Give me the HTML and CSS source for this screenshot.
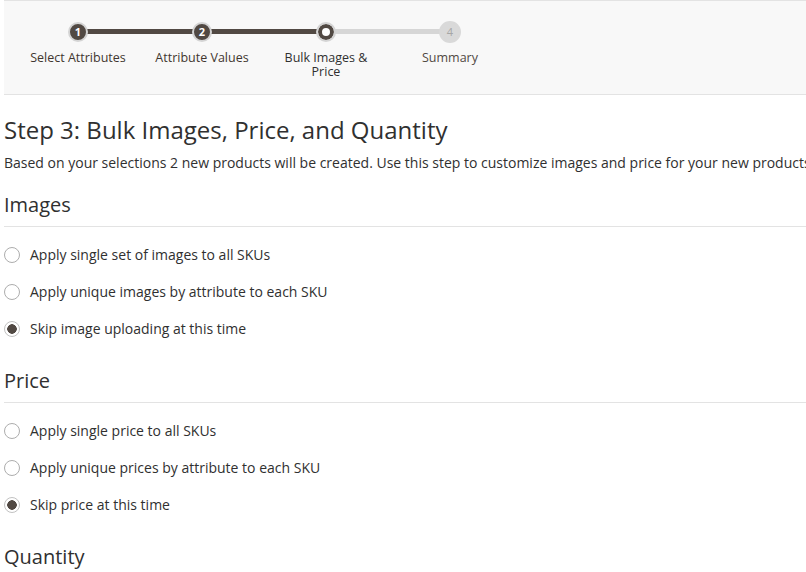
FILE: index.html
```html
<!DOCTYPE html>
<html lang="en">
<head>
<meta charset="utf-8">
<title>Step 3: Bulk Images, Price, and Quantity</title>
<link rel="stylesheet" href="styles.css">
</head>
<body>
<div class="page">
  <div class="wizard">
    <ol class="steps">
      <li class="step done"><span class="dot">1</span><span class="label">Select Attributes</span></li>
      <li class="step done"><span class="dot">2</span><span class="label">Attribute Values</span></li>
      <li class="step active"><span class="dot"></span><span class="label">Bulk Images &amp; Price</span></li>
      <li class="step todo"><span class="dot">4</span><span class="label">Summary</span></li>
    </ol>
  </div>

  <div class="content">
    <h1 class="title">Step 3: Bulk Images, Price, and Quantity</h1>
    <p class="intro">Based on your selections 2 new products will be created. Use this step to customize images and price for your new products.</p>

    <section class="section">
      <h2 class="section-title">Images</h2>
      <ul class="options">
        <li><label class="option"><input type="radio" name="images"><span>Apply single set of images to all SKUs</span></label></li>
        <li><label class="option"><input type="radio" name="images"><span>Apply unique images by attribute to each SKU</span></label></li>
        <li><label class="option"><input type="radio" name="images" checked><span>Skip image uploading at this time</span></label></li>
      </ul>
    </section>

    <section class="section">
      <h2 class="section-title">Price</h2>
      <ul class="options">
        <li><label class="option"><input type="radio" name="price"><span>Apply single price to all SKUs</span></label></li>
        <li><label class="option"><input type="radio" name="price"><span>Apply unique prices by attribute to each SKU</span></label></li>
        <li><label class="option"><input type="radio" name="price" checked><span>Skip price at this time</span></label></li>
      </ul>
    </section>

    <section class="section">
      <h2 class="section-title">Quantity</h2>
    </section>
  </div>
</div>
</body>
</html>
```

FILE: styles.css
```css
html, body {
  margin: 0;
  padding: 0;
  background: #ffffff;
  overflow: hidden;
}

body {
  font-family: "Open Sans", "Liberation Sans", sans-serif;
  color: #303030;
}

.page {
  padding-left: 4px;
  width: 900px;
}

/* ---------- wizard stepper ---------- */
.wizard {
  background: #f8f8f8;
  border-top: 1px solid #e3e3e3;
  border-bottom: 1px solid #e3e3e3;
  height: 93px;
  box-sizing: content-box;
}

.steps {
  list-style: none;
  margin: 0;
  padding: 21px 0 0 12px;
  display: flex;
}

.step {
  position: relative;
  width: 124px;
  display: flex;
  flex-direction: column;
  align-items: center;
}

.step:not(:last-child)::after {
  content: "";
  position: absolute;
  left: 62px;
  width: 124px;
  top: 7px;
  height: 5px;
  background: #514943;
  z-index: 0;
}

.step.active::after {
  background: #d6d6d6;
}

.dot {
  position: relative;
  z-index: 1;
  box-sizing: border-box;
  width: 20px;
  height: 20px;
  border-radius: 50%;
  background: #514943;
  border: 2px solid #d4d4d4;
  color: #ffffff;
  font-size: 11px;
  font-weight: 700;
  line-height: 16px;
  text-align: center;
}

.step.active .dot {
  background: #ffffff;
  border: 2px solid #d4d4d4;
  box-shadow: inset 0 0 0 4px #514943;
}

.step.todo .dot {
  width: 22px;
  height: 22px;
  margin-top: -1px;
  margin-bottom: -1px;
  background: #d9d9d9;
  border-color: #d9d9d9;
  color: #a6a6a6;
  font-weight: 400;
  font-size: 11px;
  line-height: 18px;
}

.label {
  margin-top: 9px;
  max-width: 108px;
  text-align: center;
  font-size: 12.5px;
  line-height: 14px;
  color: #41362f;
}

.step.active .label {
  color: #303030;
}

.step.todo .label {
  color: #514943;
}

/* ---------- content ---------- */
.content {
  padding-top: 20px;
}

.title {
  margin: 0 0 8px;
  font-size: 24px;
  line-height: 30px;
  font-weight: 400;
  color: #303030;
}

.intro {
  margin: 0;
  font-size: 14px;
  line-height: 20px;
  white-space: nowrap;
  color: #303030;
}

.section {
  margin-top: 20px;
}

.section + .section {
  margin-top: 30px;
}

.section-title {
  margin: 0;
  font-size: 20px;
  line-height: 24px;
  font-weight: 400;
  color: #303030;
  padding-bottom: 9px;
  border-bottom: 1px solid #e3e3e3;
}

.section:last-child .section-title {
  border-bottom: none;
}

.options {
  list-style: none;
  margin: 18px 0 0;
  padding: 0;
  display: flex;
  flex-direction: column;
  gap: 17px;
}

.option {
  display: flex;
  align-items: center;
  gap: 10px;
  font-size: 14px;
  line-height: 20px;
  color: #303030;
}

.option input {
  appearance: none;
  -webkit-appearance: none;
  margin: 0;
  width: 16px;
  height: 16px;
  border-radius: 50%;
  border: 1px solid #adadad;
  background: #ffffff;
  box-sizing: border-box;
  flex: none;
}

.option input:checked {
  border-color: #c2c2c2;
  background: radial-gradient(circle, #514943 0, #514943 4.5px, #ffffff 5px);
}
```
